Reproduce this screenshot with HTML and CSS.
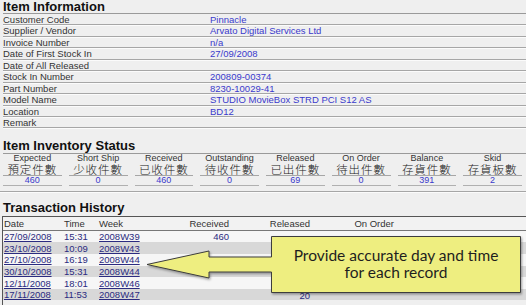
FILE: index.html
```html
<!DOCTYPE html>
<html lang="en">
<head>
    <meta charset="UTF-8">
    <title>Item Details</title>
    <link rel="stylesheet" href="styles.css">
</head>
<body>

    <div class="page">
        <h2 class="section-title">Item Information</h2>
        <div class="info">
            <div class="info-row"><span>Customer Code</span><span class="val">Pinnacle</span></div>
            <div class="info-row"><span>Supplier / Vendor</span><span class="val">Arvato Digital Services Ltd</span></div>
            <div class="info-row"><span>Invoice Number</span><span class="val">n/a</span></div>
            <div class="info-row"><span>Date of First Stock In</span><span class="val">27/09/2008</span></div>
            <div class="info-row"><span>Date of All Released</span><span class="val"></span></div>
            <div class="info-row"><span>Stock In Number</span><span class="val">200809-00374</span></div>
            <div class="info-row"><span>Part Number</span><span class="val">8230-10029-41</span></div>
            <div class="info-row"><span>Model Name</span><span class="val">STUDIO MovieBox STRD PCI S12 AS</span></div>
            <div class="info-row"><span>Location</span><span class="val">BD12</span></div>
            <div class="info-row"><span>Remark</span><span class="val"></span></div>
        </div>

        <h2 class="section-title inv-title">Item Inventory Status</h2>
        <div class="inventory">
            <div class="inv-cell"><div class="en">Expected</div><div class="zh">預定件數</div><div class="num">460</div></div>
            <div class="inv-cell"><div class="en">Short Ship</div><div class="zh">少收件數</div><div class="num">0</div></div>
            <div class="inv-cell"><div class="en">Received</div><div class="zh">已收件數</div><div class="num">460</div></div>
            <div class="inv-cell"><div class="en">Outstanding</div><div class="zh">待收件數</div><div class="num">0</div></div>
            <div class="inv-cell"><div class="en">Released</div><div class="zh">已出件數</div><div class="num">69</div></div>
            <div class="inv-cell"><div class="en">On Order</div><div class="zh">待出件數</div><div class="num">0</div></div>
            <div class="inv-cell"><div class="en">Balance</div><div class="zh">存貨件數</div><div class="num">391</div></div>
            <div class="inv-cell"><div class="en">Skid</div><div class="zh">存貨板數</div><div class="num">2</div></div>
        </div>

        <h2 class="section-title tx-title">Transaction History</h2>
        <div class="tx-wrap">
            <table class="tx">
                <colgroup>
                    <col class="c-date"><col class="c-time"><col class="c-week">
                    <col class="c-rec"><col class="c-rel"><col class="c-ord"><col>
                </colgroup>
                <thead>
                    <tr><th>Date</th><th>Time</th><th>Week</th><th class="r">Received</th><th class="r">Released</th><th class="r">On Order</th><th></th></tr>
                </thead>
                <tbody>
                    <tr><td><a>27/09/2008</a></td><td>15:31</td><td><a>2008W39</a></td><td class="r">460</td><td></td><td></td><td></td></tr>
                    <tr><td><a>23/10/2008</a></td><td>10:09</td><td><a>2008W43</a></td><td></td><td></td><td></td><td></td></tr>
                    <tr><td><a>27/10/2008</a></td><td>16:19</td><td><a>2008W44</a></td><td></td><td></td><td></td><td></td></tr>
                    <tr><td><a>30/10/2008</a></td><td>15:31</td><td><a>2008W44</a></td><td></td><td></td><td></td><td></td></tr>
                    <tr><td><a>12/11/2008</a></td><td>18:01</td><td><a>2008W46</a></td><td></td><td></td><td></td><td></td></tr>
                    <tr><td><a>17/11/2008</a></td><td>11:53</td><td><a>2008W47</a></td><td></td><td class="r low">20</td><td></td><td></td></tr>
                </tbody>
            </table>
        </div>

        <svg class="callout-shape" width="526" height="305" viewBox="0 0 526 305">
            <defs>
                <filter id="shadow" x="-10%" y="-20%" width="130%" height="150%">
                    <feDropShadow dx="1" dy="1.5" stdDeviation="1" flood-color="#000" flood-opacity="0.35"/>
                </filter>
            </defs>
            <path d="M271.5 236.5 H520.5 V292.5 H271.5 V272 H209 V278 L147 264.5 L209 251 V257 H271.5 Z"
                  fill="#eeee80" stroke="#3c3c3c" stroke-width="1" filter="url(#shadow)"/>
        </svg>
        <div class="callout-text">Provide accurate day and time<br>for each record</div>
    </div>

</body>
</html>
```

FILE: styles.css
```css
* {
    margin: 0;
    padding: 0;
    box-sizing: border-box;
}

body {
    background: #efefef;
    font-family: 'Liberation Sans', Arial, sans-serif;
    font-size: 9.5px;
    color: #333;
    overflow: hidden;
}

.page {
    position: relative;
    width: 526px;
    height: 305px;
    overflow: hidden;
}

.section-title {
    height: 14px;
    line-height: 14px;
    margin-left: 3px;
    font-size: 13px;
    font-weight: bold;
    color: #111;
    border-bottom: 1px solid #9a9a9a;
}

.info {
    margin-left: 3px;
}

.info-row {
    display: grid;
    grid-template-columns: 207px 1fr;
    height: 11.45px;
    line-height: 11px;
    border-bottom: 1px solid #a6a6a6;
    box-shadow: 0 1px 0 #fbfbfb;
    color: #333;
}

.val {
    color: #3a3acc;
}

.inv-title {
    margin-top: 11px;
    height: 15px;
}

.inventory {
    display: grid;
    grid-template-columns: repeat(8, 1fr);
    padding-bottom: 5px;
    border-bottom: 1px solid #a6a6a6;
    box-shadow: 0 1px 0 #fbfbfb;
    text-align: center;
}

.inv-cell {
    padding: 0 4px 0 3px;
}

.inv-cell .en {
    font-size: 9px;
    line-height: 9px;
    height: 9px;
    color: #333;
}

.inv-cell .zh {
    font-family: 'Noto Sans CJK TC', sans-serif;
    font-weight: 300;
    font-size: 11.5px;
    line-height: 12px;
    height: 13px;
    color: #222;
    border-bottom: 1px solid #a6a6a6;
    letter-spacing: 1px;
}

.inv-cell .num {
    font-size: 9px;
    line-height: 9px;
    height: 10px;
    color: #3a3acc;
    border-bottom: 1px solid #b0b0b0;
}

.tx-title {
    margin-top: 9px;
    border-bottom: none;
    height: 15px;
}

.tx-wrap {
    margin-left: 2px;
    height: 100px;
    border-left: 1px solid #555;
}

.tx {
    width: 100%;
    border-collapse: collapse;
    table-layout: fixed;
}

.c-date { width: 60px; }
.c-time { width: 35px; }
.c-week { width: 60px; }
.c-rec { width: 74px; }
.c-rel { width: 81px; }
.c-ord { width: 84px; }

.tx th {
    height: 14px;
    font-weight: normal;
    text-align: left;
    padding-left: 1px;
    color: #333;
    border-top: 1px solid #555;
    border-bottom: 1px solid #777;
    background: #f2f2f2;
}

.tx td {
    height: 11.6px;
    line-height: 11px;
    padding: 0 0 0 1px;
    color: #2b2b80;
    white-space: nowrap;
}

.tx .r {
    text-align: right;
    padding-right: 3px;
}

.tx .low {
    vertical-align: bottom;
    line-height: 9px;
}

.tx tbody tr:nth-child(odd) {
    background: #f6f6f6;
}

.tx tbody tr:nth-child(even) {
    background: #d8d8d8;
}

.tx a {
    color: #2b2b80;
    text-decoration: underline;
}

.callout-shape {
    position: absolute;
    top: 0;
    left: 0;
    pointer-events: none;
}

.callout-text {
    position: absolute;
    left: 272px;
    top: 236px;
    width: 248px;
    height: 55px;
    display: flex;
    align-items: center;
    justify-content: center;
    text-align: center;
    font-family: 'Lato', sans-serif;
    font-size: 15.5px;
    line-height: 17px;
    color: #1e1e1e;
}
```
